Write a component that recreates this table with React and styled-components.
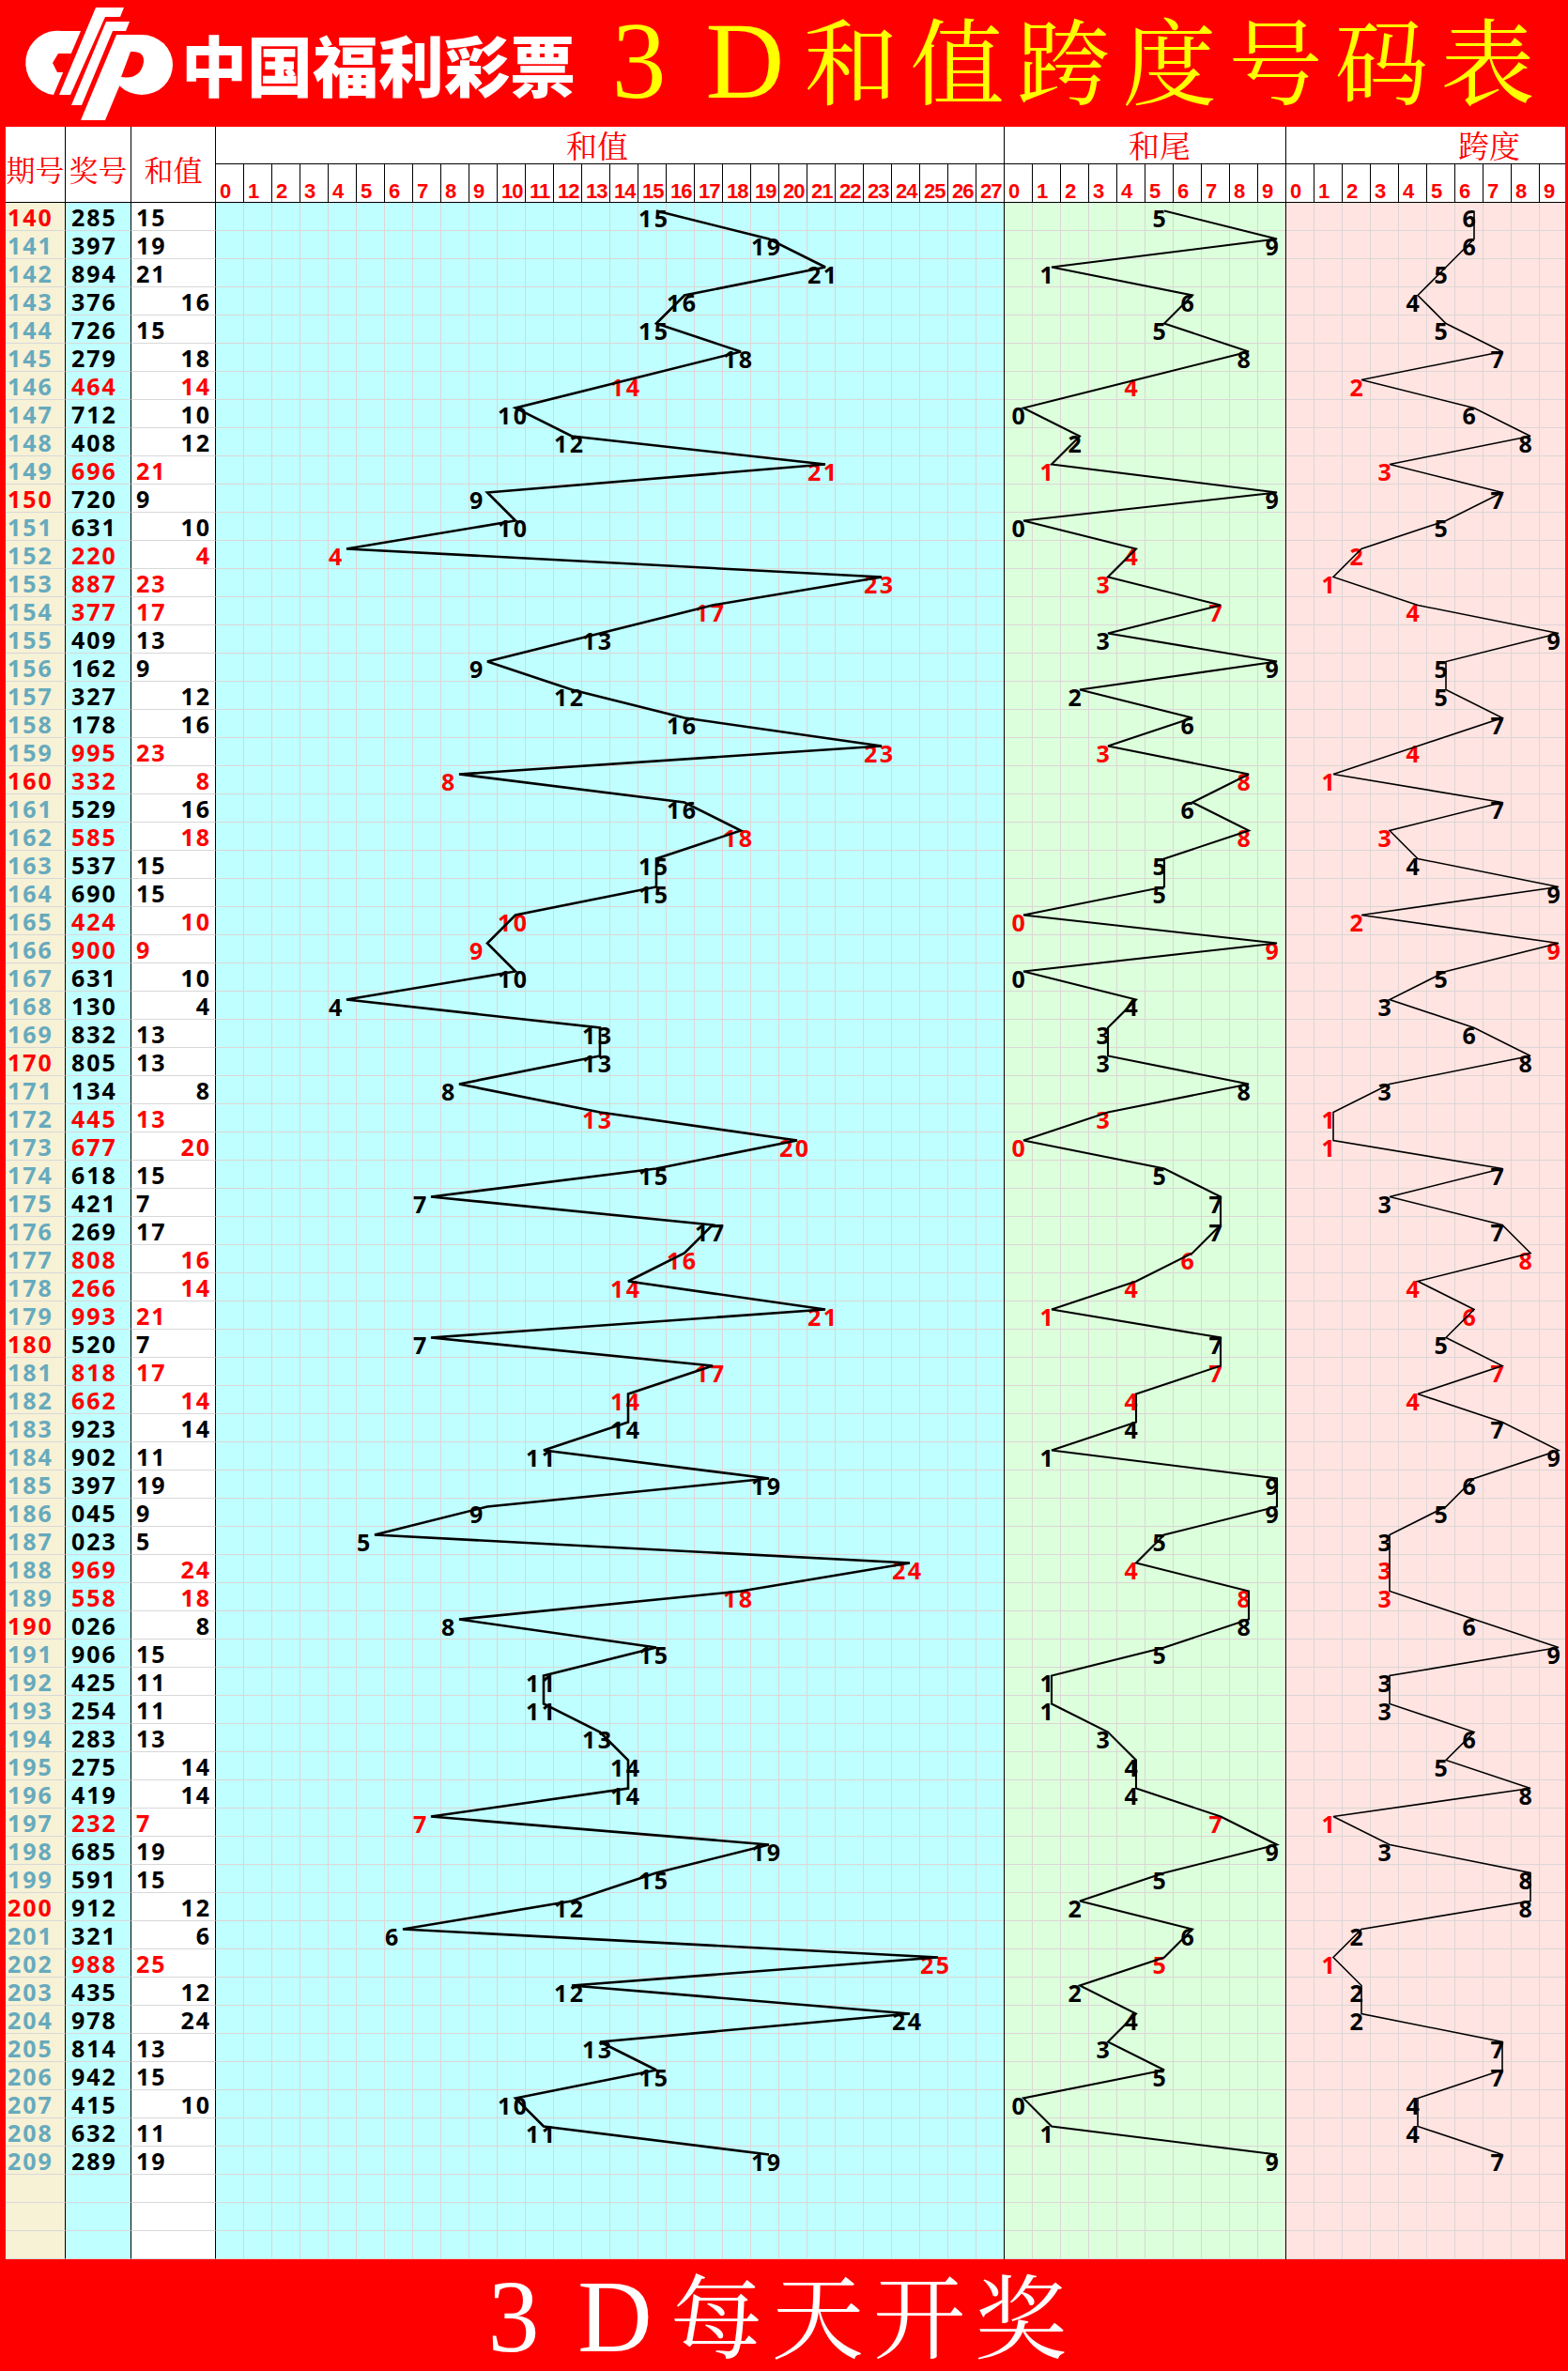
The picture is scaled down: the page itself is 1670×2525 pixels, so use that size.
import React from "react";
import styled, { createGlobalStyle } from "styled-components";

const RED = "#ff0000";
const TEAL = "#66aabd";
const GRID = "#dcd6d6";
const ROW_H = 30;
const CELL_W = 30;
const EMPTY_ROWS = 3;

const DRAWS = "285 397 894 376 726 279 464 712 408 696 720 631 220 887 377 409 162 327 178 995 332 529 585 537 690 424 900 631 130 832 805 134 445 677 618 421 269 808 266 993 520 818 662 923 902 397 045 023 969 558 026 906 425 254 283 275 419 232 685 591 912 321 988 435 978 814 942 415 632 289".split(" ");

const ROWS = DRAWS.map((n, i) => {
  const d = n.split("").map(Number);
  const sum = d[0] + d[1] + d[2];
  return {
    issue: 140 + i,
    number: n,
    sum,
    tail: sum % 10,
    span: Math.max(...d) - Math.min(...d),
    pair: new Set(d).size < 3,
  };
});

const SECTIONS = [
  { key: "sum", title: "和值", count: 28, width: 840, bg: "#c0ffff", titlePad: 373, stroke: 2.6, dx: 4, edge: true, anchor: "start" },
  { key: "tail", title: "和尾", count: 10, width: 300, bg: "#dcffdc", titlePad: 132, stroke: 2.1, dx: 5, edge: true, anchor: "middle" },
  { key: "span", title: "跨度", count: 10, width: 297, bg: "#ffe4e1", titlePad: 183, stroke: 1.6, dx: 5, edge: false, anchor: "middle" },
];

const GlobalStyle = createGlobalStyle`
  html, body { margin: 0; padding: 0; background: ${RED}; }
  body { width: 1670px; }
  * { box-sizing: border-box; }
`;

const Page = styled.div`
  width: 1670px;
  background: ${RED};
  display: flex;
  flex-direction: column;
`;

/* ---------- banner ---------- */
const Banner = styled.header`
  height: 135px;
  display: flex;
  align-items: center;
  padding-left: 20px;
`;

const LogoSvg = styled.svg`
  display: block;
  flex: none;
`;

const BrandName = styled.div`
  margin-left: 3px;
  font-family: "Noto Sans CJK SC", sans-serif;
  font-weight: 900;
  font-size: 70px;
  line-height: 1.2;
  color: #ffffff;
  white-space: nowrap;
`;

const GlyphLine = styled.div`
  display: flex;
  align-items: baseline;
  margin-left: ${(p) => p.$left}px;
  margin-top: ${(p) => p.$top}px;
  color: ${(p) => p.$color};
`;

const Glyph = styled.span`
  display: inline-block;
  width: ${(p) => p.$pitch}px;
  text-align: center;
  line-height: 1.2;
  font-weight: 400;
  font-family: ${(p) =>
    p.$latin
      ? '"Liberation Serif", serif'
      : '"Noto Serif CJK SC", "Noto Sans CJK SC", serif'};
  font-size: ${(p) => p.$size}px;
`;

/* ---------- sheet header ---------- */
const SheetHead = styled.div`
  display: grid;
  grid-template-columns: 64px 70px 90px 840px 300px 297px;
  grid-template-rows: 40px 41px;
  margin: 0 3px 0 6px;
  background: #ffffff;
`;

const ColumnHead = styled.div`
  grid-row: 1 / span 2;
  display: flex;
  align-items: center;
  justify-content: center;
  padding-top: 10px;
  border-right: 1px solid #000;
  border-bottom: 1px solid #000;
  color: ${RED};
  font-family: "Noto Serif CJK SC", "Noto Sans CJK SC", serif;
  font-size: 31px;
  line-height: 1.2;
  white-space: nowrap;
`;

const SectionTitle = styled.div`
  grid-row: 1;
  display: flex;
  align-items: center;
  padding-left: ${(p) => p.$pad}px;
  border-bottom: 1px solid #000;
  border-right: ${(p) => (p.$edge ? "1px solid #000" : "none")};
  color: ${RED};
  font-family: "Noto Serif CJK SC", "Noto Sans CJK SC", serif;
  font-size: 33px;
  line-height: 1.1;
  white-space: nowrap;
`;

const NumberStrip = styled.div`
  grid-row: 2;
  display: grid;
  grid-template-columns: repeat(${(p) => p.$count}, ${CELL_W}px);
  overflow: hidden;
  border-bottom: 1px solid #000;
`;

const NumCell = styled.div`
  display: flex;
  align-items: flex-end;
  padding-left: 4px;
  border-right: 1px solid #000;
  color: ${RED};
  font-family: "Liberation Sans", Arial, sans-serif;
  font-weight: 700;
  font-size: 22px;
  line-height: 23px;
  letter-spacing: -1px;
  white-space: nowrap;
`;

/* ---------- sheet body ---------- */
const SheetBody = styled.div`
  display: flex;
  margin: 0 3px 0 6px;
`;

const Ledger = styled.div`
  display: flex;
  flex-direction: column;
  width: 224px;
`;

const LedgerRow = styled.div`
  display: grid;
  grid-template-columns: 64px 70px 90px;
  height: ${ROW_H}px;
`;

const LedgerCell = styled.div`
  display: flex;
  justify-content: ${(p) => (p.$right ? "flex-end" : "flex-start")};
  padding: 1px ${(p) => (p.$right ? 4 : 0)}px 0 ${(p) => p.$pad}px;
  background: ${(p) => p.$bg};
  border-right: 1px solid #000;
  border-bottom: 1px solid #d8d8d8;
  color: ${(p) => p.$color};
  font-family: "Open Sans", "Noto Sans", sans-serif;
  font-weight: 700;
  font-size: 25px;
  line-height: 28px;
  letter-spacing: 2px;
  white-space: nowrap;
`;

const ChartPanel = styled.div`
  position: relative;
  width: ${(p) => p.$width}px;
  height: ${(ROWS.length + EMPTY_ROWS) * ROW_H}px;
  background-color: ${(p) => p.$bg};
  background-image: linear-gradient(to right, transparent 29px, ${GRID} 29px),
    linear-gradient(to bottom, transparent 29px, ${GRID} 29px);
  background-size: ${CELL_W}px ${ROW_H}px;
  border-right: ${(p) => (p.$edge ? "1px solid #000" : "none")};
`;

const ChartSvg = styled.svg`
  position: absolute;
  left: 0;
  top: 0;
  overflow: visible;
`;

const Label = styled.text`
  font-family: "Open Sans", "Noto Sans", sans-serif;
  font-weight: 700;
  font-size: 25px;
  letter-spacing: 2.5px;
`;

const Trace = styled.polyline`
  fill: none;
  stroke: #000;
  stroke-linejoin: miter;
  stroke-miterlimit: 3;
`;

/* ---------- footer ---------- */
const Footer = styled.footer`
  height: 119px;
  display: flex;
  align-items: center;
`;

/* ---------- parts ---------- */
const LogoMark = () => (
  <LogoSvg viewBox="20 0 170 135" width="170" height="135">
    <path d="M86 33 L57 101 A34 34 0 0 1 66 33 Z" fill="#fff" />
    <polygon points="76,57 62,57 56,67 61,77 68,77" fill={RED} />
    <polygon points="102,8 132,8 128,18 112,18 75,101 63,101" fill="#fff" />
    <polygon points="113,23 138,23 134,33 120,33 87,112 76,112" fill="#fff" />
    <polygon points="124,37 150,37 112,128 86,128" fill="#fff" />
    <ellipse cx="151" cy="69" rx="33" ry="32" fill="#fff" />
    <path d="M139 55 L129 82 Q150 85 153 66 Q154 54 139 55 Z" fill={RED} />
  </LogoSvg>
);

const GlyphRow = ({ text, pitch, latinSize, hanSize, left, top, color }) => (
  <GlyphLine $left={left} $top={top} $color={color}>
    {Array.from(text).map((ch, i) => {
      const latin = /[0-9A-Z]/.test(ch);
      return (
        <Glyph key={i} $pitch={pitch} $latin={latin} $size={latin ? latinSize : hanSize}>
          {ch}
        </Glyph>
      );
    })}
  </GlyphLine>
);

const Chart = ({ section }) => {
  const h = (ROWS.length + EMPTY_ROWS) * ROW_H;
  const pts = ROWS.map((r, i) => {
    const v = r[section.key];
    const cx = v * CELL_W + CELL_W / 2;
    return `${cx + section.dx},${i * ROW_H + 8.5}`;
  }).join(" ");
  return (
    <ChartPanel $width={section.width} $bg={section.bg} $edge={section.edge}>
      <ChartSvg width={section.width} height={h} viewBox={`0 0 ${section.width} ${h}`}>
        {ROWS.map((r, i) => {
          const v = r[section.key];
          const x = section.anchor === "start" ? v * CELL_W : v * CELL_W + CELL_W / 2 + 1;
          return (
            <Label
              key={r.issue}
              x={x}
              y={i * ROW_H + 26}
              textAnchor={section.anchor}
              fill={r.pair ? RED : "#000"}
            >
              {v}
            </Label>
          );
        })}
        <Trace points={pts} strokeWidth={section.stroke} />
      </ChartSvg>
    </ChartPanel>
  );
};

export default function App() {
  const blanks = Array.from({ length: EMPTY_ROWS });
  return (
    <Page>
      <GlobalStyle />
      <Banner>
        <LogoMark />
        <BrandName>中国福利彩票</BrandName>
        <GlyphRow
          text="3D和值跨度号码表"
          pitch={113}
          latinSize={116}
          hanSize={100}
          left={11}
          top={-4}
          color="#ffff00"
        />
      </Banner>

      <SheetHead>
        <ColumnHead>期号</ColumnHead>
        <ColumnHead>奖号</ColumnHead>
        <ColumnHead>和值</ColumnHead>
        {SECTIONS.map((s) => (
          <SectionTitle key={s.key} $pad={s.titlePad} $edge={s.edge}>
            {s.title}
          </SectionTitle>
        ))}
        {SECTIONS.map((s) => (
          <NumberStrip key={s.key} $count={s.count}>
            {Array.from({ length: s.count }).map((_, i) => (
              <NumCell key={i}>{i}</NumCell>
            ))}
          </NumberStrip>
        ))}
      </SheetHead>

      <SheetBody>
        <Ledger>
          {ROWS.map((r) => (
            <LedgerRow key={r.issue}>
              <LedgerCell $bg="#f7f1d6" $pad={2} $color={r.issue % 10 === 0 ? RED : TEAL}>
                {r.issue}
              </LedgerCell>
              <LedgerCell $bg="#c0ffff" $pad={6} $color={r.pair ? RED : "#000"}>
                {r.number}
              </LedgerCell>
              <LedgerCell
                $bg="#ffffff"
                $pad={5}
                $right={r.sum % 2 === 0}
                $color={r.pair ? RED : "#000"}
              >
                {r.sum}
              </LedgerCell>
            </LedgerRow>
          ))}
          {blanks.map((_, i) => (
            <LedgerRow key={`b${i}`}>
              <LedgerCell $bg="#f7f1d6" $pad={2} $color={TEAL} />
              <LedgerCell $bg="#c0ffff" $pad={6} $color="#000" />
              <LedgerCell $bg="#ffffff" $pad={5} $color="#000" />
            </LedgerRow>
          ))}
        </Ledger>
        {SECTIONS.map((s) => (
          <Chart key={s.key} section={s} />
        ))}
      </SheetBody>

      <Footer>
        <GlyphRow
          text="3D每天开奖"
          pitch={108}
          latinSize={110}
          hanSize={98}
          left={493}
          top={2}
          color="#ffffff"
        />
      </Footer>
    </Page>
  );
}
